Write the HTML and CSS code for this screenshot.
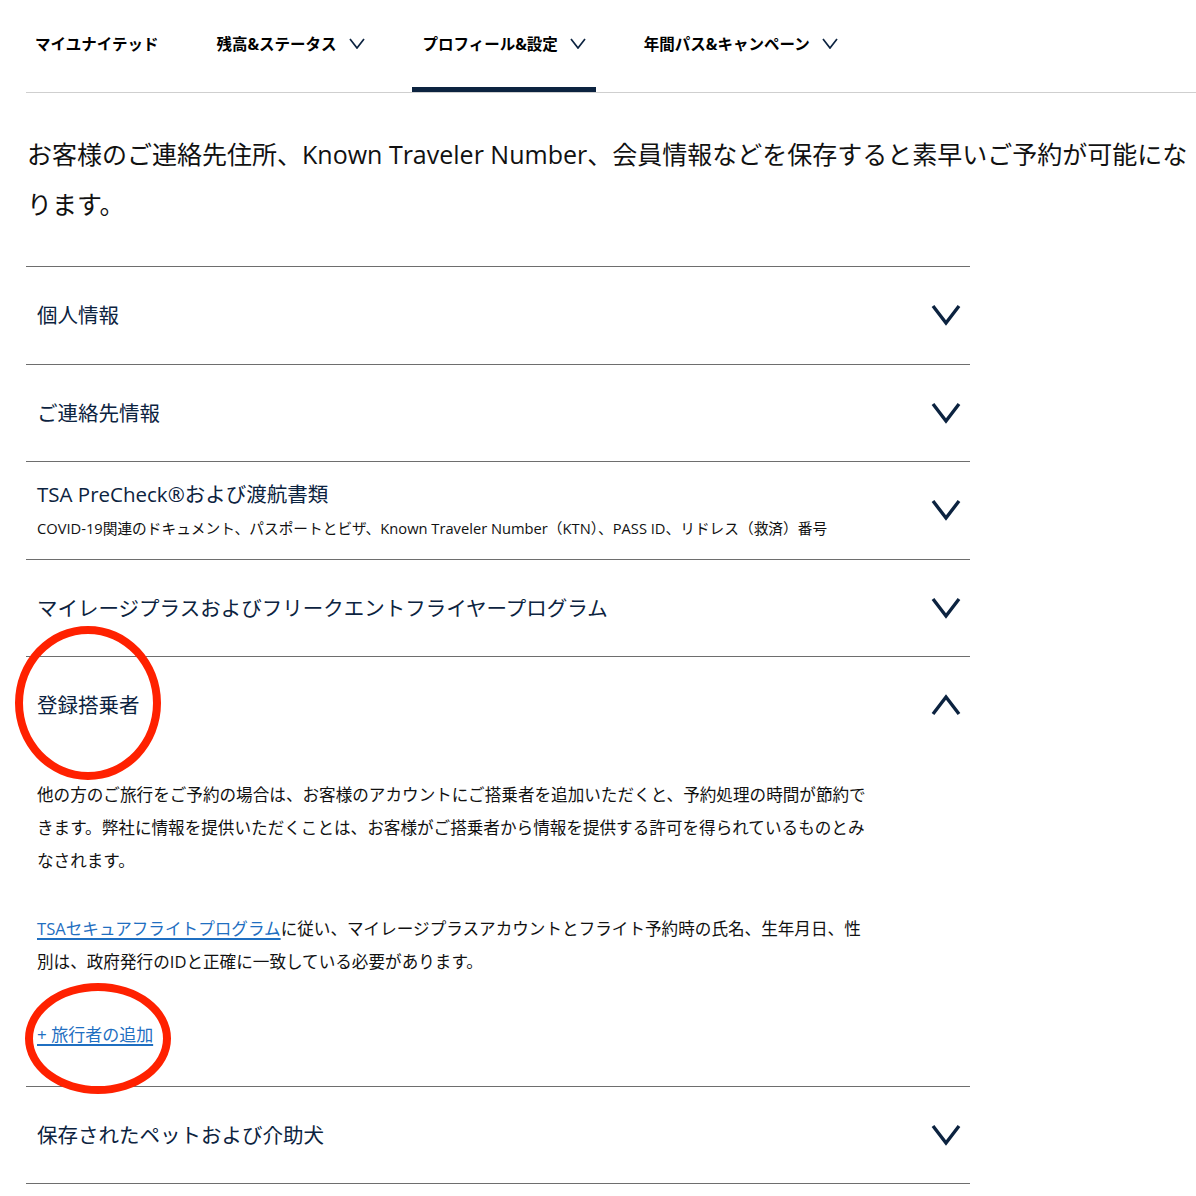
FILE: index.html
```html
<!DOCTYPE html>
<html lang="ja">
<head>
<meta charset="utf-8">
<title>プロフィール＆設定</title>
<link rel="stylesheet" href="styles.css">
</head>
<body>
<div class="page">
  <nav class="tabs">
    <a class="tab">マイユナイテッド</a>
    <a class="tab">残高&amp;ステータス<svg class="tab-chev" viewBox="0 0 16 11"><polyline points="1,1 8,10 15,1"/></svg></a>
    <a class="tab active">プロフィール&amp;設定<svg class="tab-chev" viewBox="0 0 16 11"><polyline points="1,1 8,10 15,1"/></svg></a>
    <a class="tab">年間パス&amp;キャンペーン<svg class="tab-chev" viewBox="0 0 16 11"><polyline points="1,1 8,10 15,1"/></svg></a>
  </nav>

  <p class="intro">お客様のご連絡先住所、Known Traveler Number、会員情報などを保存すると素早いご予約が可能になります。</p>

  <div class="accordion">
    <div class="acc-item">
      <div class="acc-head">
        <div class="acc-title">個人情報</div>
        <svg class="acc-chev" viewBox="0 0 30 24"><polyline points="2,3 15,20 28,3"/></svg>
      </div>
    </div>
    <div class="acc-item">
      <div class="acc-head">
        <div class="acc-title">ご連絡先情報</div>
        <svg class="acc-chev" viewBox="0 0 30 24"><polyline points="2,3 15,20 28,3"/></svg>
      </div>
    </div>
    <div class="acc-item">
      <div class="acc-head">
        <div>
          <div class="acc-title">TSA PreCheck®および渡航書類</div>
          <div class="acc-sub">COVID-19関連のドキュメント、パスポートとビザ、Known Traveler Number（KTN）、PASS ID、リドレス（救済）番号</div>
        </div>
        <svg class="acc-chev" viewBox="0 0 30 24"><polyline points="2,3 15,20 28,3"/></svg>
      </div>
    </div>
    <div class="acc-item">
      <div class="acc-head">
        <div class="acc-title">マイレージプラスおよびフリークエントフライヤープログラム</div>
        <svg class="acc-chev" viewBox="0 0 30 24"><polyline points="2,3 15,20 28,3"/></svg>
      </div>
    </div>
    <div class="acc-item open">
      <div class="acc-head">
        <div class="acc-title">登録搭乗者</div>
        <svg class="acc-chev" viewBox="0 0 30 24"><polyline points="2,21 15,4 28,21"/></svg>
      </div>
      <div class="acc-panel">
        <p class="panel-text">他の方のご旅行をご予約の場合は、お客様のアカウントにご搭乗者を追加いただくと、予約処理の時間が節約できます。弊社に情報を提供いただくことは、お客様がご搭乗者から情報を提供する許可を得られているものとみなされます。</p>
        <p class="panel-text"><a class="link">TSAセキュアフライトプログラム</a>に従い、マイレージプラスアカウントとフライト予約時の氏名、生年月日、性別は、政府発行のIDと正確に一致している必要があります。</p>
        <p class="add-line"><a class="link add-link">+ 旅行者の追加</a></p>
      </div>
    </div>
    <div class="acc-item">
      <div class="acc-head">
        <div class="acc-title">保存されたペットおよび介助犬</div>
        <svg class="acc-chev" viewBox="0 0 30 24"><polyline points="2,3 15,20 28,3"/></svg>
      </div>
    </div>
  </div>

  <div class="mark mark-title"></div>
  <div class="mark mark-add"></div>
</div>
</body>
</html>
```
FILE: styles.css
```css
* { box-sizing: border-box; }

html, body {
  margin: 0;
  padding: 0;
  background: #ffffff;
}

body {
  font-family: "Open Sans", "Noto Sans CJK JP", sans-serif;
  color: #111111;
}

.page {
  position: relative;
  padding-left: 26px;
  overflow: hidden;
}

/* top tabs */
.tabs {
  display: flex;
  gap: 39px;
  height: 93px;
  border-bottom: 1px solid #cfcfcf;
}

.tab {
  display: flex;
  align-items: center;
  height: 92px;
  padding: 0 10px 0 11px;
  margin-left: -2px;
  font-size: 15.5px;
  font-weight: 700;
  color: #000000;
  border-bottom: 5px solid transparent;
  white-space: nowrap;
}

.tab.active {
  border-bottom-color: #0c2340;
}

.tab-chev {
  width: 16px;
  height: 11px;
  margin-left: 12px;
  fill: none;
  stroke: #0c2340;
  stroke-width: 1.7;
}

/* intro heading */
.intro {
  margin: 36px 0 37px 1px;
  font-size: 25px;
  line-height: 50px;
  color: #111111;
}

/* accordion */
.accordion {
  width: 944px;
  border-bottom: 1px solid #6e6e6e;
}

.acc-item {
  border-top: 1px solid #6e6e6e;
}

.acc-head {
  display: flex;
  align-items: center;
  justify-content: space-between;
  min-height: 96.5px;
  padding: 0 9px 0 11px;
}

.acc-title {
  font-size: 20.5px;
  line-height: 30px;
  color: #0c2340;
}

.acc-sub {
  margin-top: 6px;
  font-size: 14.7px;
  line-height: 26px;
  color: #111111;
}

.acc-chev {
  flex: none;
  width: 30px;
  height: 24px;
  fill: none;
  stroke: #0c2340;
  stroke-width: 3.4;
}

.acc-panel {
  padding: 24px 11px 35px;
}

.panel-text {
  width: 840px;
  margin: 0 0 35px;
  font-size: 16.6px;
  line-height: 33px;
  color: #111111;
}

.link {
  color: #1f6fc1;
  text-decoration: underline;
  text-decoration-thickness: 1.5px;
  text-underline-offset: 3px;
}

.add-line {
  margin: 40px 0 0;
  font-size: 17px;
  line-height: 33px;
}

.add-link {
  font-size: 17px;
}

/* red annotation marks */
.mark {
  position: absolute;
  border: 8px solid #ff2100;
  border-radius: 50%;
  pointer-events: none;
}

.mark-title {
  left: 15px;
  top: 626px;
  width: 146px;
  height: 154px;
}

.mark-add {
  left: 25px;
  top: 983px;
  width: 146px;
  height: 111px;
}
```
